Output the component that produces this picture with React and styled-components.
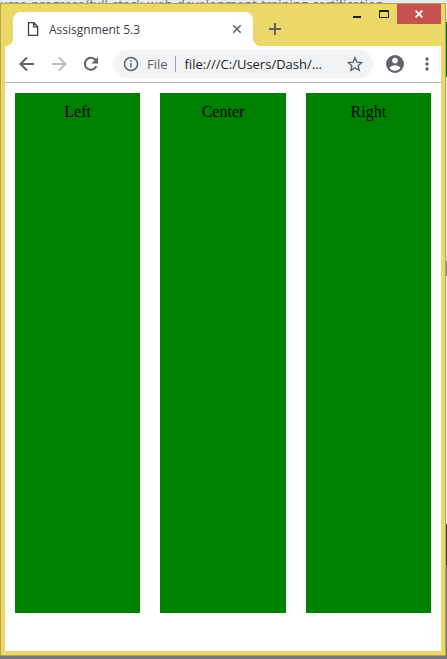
import React from "react";
import styled, { createGlobalStyle } from "styled-components";

const GlobalStyle = createGlobalStyle`
  * { box-sizing: border-box; }
  body { margin: 0; background: #808080; }
  button { font: inherit; }
`;

const Desktop = styled.div`
  display: flex;
  flex-direction: column;
  min-height: 100vh;
  padding: 0 1px 3px 0;
  overflow: hidden;
  background: linear-gradient(
    #e8e8e8 0 22px, #087008 22px 77px, #e8e8e8 77px 261px, #888888 261px 276px,
    #f0f0f0 276px 524px, #404040 524px 565px, #777777 565px
  );
`;

const BackdropLine = styled.div`
  height: 3px;
  overflow: hidden;
  background: #e9eaec;
  color: #6d7075;
  font: 13px/8px "Open Sans", sans-serif;
  white-space: nowrap;
`;

const Window = styled.div`
  display: flex;
  flex: 1;
  flex-direction: column;
  border: 1px solid #b5a353;
  background: #ecd769;
  padding: 0 4px 4px;
  font-family: "Open Sans", sans-serif;
`;

const TitleBar = styled.header`
  display: flex;
  align-items: flex-end;
  height: 42px;
`;

const Tab = styled.div`
  position: relative;
  display: flex;
  align-items: center;
  flex: 0 1 240px;
  height: 34px;
  margin-left: 8px;
  padding: 0 9px 0 14px;
  border-radius: 8px 8px 0 0;
  background: #ffffff;
  color: #3c4043;
  font-size: 12px;

  &::before,
  &::after {
    content: "";
    position: absolute;
    bottom: 0;
    width: 8px;
    height: 8px;
  }
  &::before {
    right: 100%;
    background: radial-gradient(circle at 0 0, transparent 8px, #ffffff 8px);
  }
  &::after {
    left: 100%;
    background: radial-gradient(circle at 100% 0, transparent 8px, #ffffff 8px);
  }
`;

const TabTitle = styled.span`
  flex: 1;
  margin-left: 10px;
  white-space: nowrap;
`;

const IconButton = styled.button`
  display: grid;
  place-items: center;
  flex: none;
  width: ${(p) => p.$size}px;
  height: ${(p) => p.$size}px;
  padding: 0;
  border: 0;
  background: none;
  color: ${(p) => p.$color || "#5f6368"};
`;

const NewTab = styled(IconButton)`
  margin: 0 0 5px 10px;
`;

const MenuButton = styled(IconButton)`
  margin-left: 6px;
`;

const WindowControls = styled.div`
  display: flex;
  align-self: flex-start;
  margin-left: auto;
`;

const CaptionButton = styled.button`
  display: grid;
  place-items: center;
  width: ${(p) => (p.$close ? 44 : 27)}px;
  height: 20px;
  padding: 0;
  border: 0;
  background: ${(p) => (p.$close ? "#c75050" : "transparent")};
  color: ${(p) => (p.$close ? "#ffffff" : "#1f1f1f")};
`;

const Toolbar = styled.nav`
  display: flex;
  align-items: center;
  height: 37px;
  padding: 0 4px 0 6px;
  border-bottom: 1px solid #b2b4b6;
  background: #ffffff;
`;

const AddressBar = styled.div`
  display: flex;
  align-items: center;
  flex: 1;
  min-width: 0;
  height: 28px;
  margin: 0 6px;
  padding: 0 8px 0 10px;
  border-radius: 14px;
  background: #f1f3f4;
  color: #5f6368;
  font-size: 13px;
`;

const Scheme = styled.span`
  margin-left: 8px;
  padding-right: 7px;
  border-right: 1px solid #9aa0a6;
  line-height: 16px;
`;

const AddressInput = styled.input`
  flex: 1;
  min-width: 0;
  margin: 0 18px 0 9px;
  padding: 0;
  border: 0;
  outline: 0;
  background: none;
  color: #202124;
  font: inherit;
`;

const Page = styled.main`
  display: grid;
  grid-template-columns: repeat(3, 1fr);
  align-items: start;
  flex: 1;
  gap: 20px;
  padding: 10px;
  background: #ffffff;
`;

const Column = styled.section`
  min-height: 520px;
  padding: 10px;
  background: #008000;
  color: #000000;
  font: 16px/18px "Liberation Serif", serif;
  text-align: center;
`;

const Glyph = ({ size = 16, children, ...rest }) => (
  <svg width={size} height={size} viewBox={`0 0 ${size} ${size}`} fill="none" stroke="currentColor" aria-hidden="true" {...rest}>
    {children}
  </svg>
);

const columns = ["Left", "Center", "Right"];

export default function App() {
  return (
    <Desktop>
      <GlobalStyle />
      <BackdropLine>urse-progress/full-stack-web-development-training-certification</BackdropLine>
      <Window>
        <TitleBar>
          <Tab>
            <Glyph size={12} viewBox="0 0 12 14" height={14} strokeWidth="1.3">
              <path d="M1.5 .7h5.3l3.9 3.9v8.7H1.5zM6.6 .7v4.1h4.1" />
            </Glyph>
            <TabTitle>Assisgnment 5.3</TabTitle>
            <IconButton $size={14} aria-label="Close tab">
              <Glyph size={14} strokeWidth="1.6"><path d="m3.3 3.3 7.4 7.4m0-7.4-7.4 7.4" /></Glyph>
            </IconButton>
          </Tab>
          <NewTab $size={24} aria-label="New tab">
            <Glyph size={12} strokeWidth="2"><path d="M6 0v12M0 6h12" /></Glyph>
          </NewTab>
          <WindowControls>
            <CaptionButton aria-label="Minimize">
              <Glyph strokeWidth="2"><path d="M4 11h8" /></Glyph>
            </CaptionButton>
            <CaptionButton aria-label="Maximize">
              <Glyph><path d="M3.5 4.5h9v7h-9zM3 5.5h10" /></Glyph>
            </CaptionButton>
            <CaptionButton $close aria-label="Close window">
              <Glyph size={12} strokeWidth="1.8"><path d="m2.7 2.7 6.6 6.6m0-6.6-6.6 6.6" /></Glyph>
            </CaptionButton>
          </WindowControls>
        </TitleBar>
        <Toolbar>
          <IconButton $size={32} aria-label="Back">
            <Glyph strokeWidth="2"><path d="M15 8H2M8 1.5 1.5 8 8 14.5" /></Glyph>
          </IconButton>
          <IconButton $size={32} $color="#babcbe" aria-label="Forward">
            <Glyph strokeWidth="2"><path d="M1 8h13M8 1.5 14.5 8 8 14.5" /></Glyph>
          </IconButton>
          <IconButton $size={32} aria-label="Reload">
            <Glyph strokeWidth="2">
              <path d="M13.4 10.2A6 6 0 1 1 12.6 4l.9 1" />
              <path d="M15 1v6.4H8.6z" fill="currentColor" stroke="none" />
            </Glyph>
          </IconButton>
          <AddressBar>
            <Glyph strokeWidth="1.5">
              <circle cx="8" cy="8" r="6.5" />
              <path d="M8 7v4.6M8 4.2v1.6" />
            </Glyph>
            <Scheme>File</Scheme>
            <AddressInput aria-label="Address" readOnly value="file:///C:/Users/Dash/..." />
            <IconButton $size={20} aria-label="Bookmark this page">
              <Glyph strokeWidth="1.4">
                <path d="m8 1.7 1.9 4.4 4.8.4-3.6 3.2 1.1 4.7L8 11.9l-4.2 2.5 1.1-4.7-3.6-3.2 4.8-.4z" />
              </Glyph>
            </IconButton>
          </AddressBar>
          <IconButton $size={32} aria-label="Profile">
            <Glyph size={18} fill="currentColor" stroke="none">
              <path fillRule="evenodd" d="M9 0a9 9 0 1 1 0 18A9 9 0 0 1 9 0zm0 2.8a2.8 2.8 0 1 0 0 5.6 2.8 2.8 0 0 0 0-5.6zm0 7.5c-1.9 0-5.3 1-5.3 2.9a6.6 6.6 0 0 0 10.6 0c0-1.9-3.4-2.9-5.3-2.9z" />
            </Glyph>
          </IconButton>
          <MenuButton $size={20} aria-label="Menu">
            <Glyph fill="currentColor" stroke="none">
              <circle cx="8" cy="3" r="1.7" />
              <circle cx="8" cy="8" r="1.7" />
              <circle cx="8" cy="13" r="1.7" />
            </Glyph>
          </MenuButton>
        </Toolbar>
        <Page>
          {columns.map((name) => (
            <Column key={name}>{name}</Column>
          ))}
        </Page>
      </Window>
    </Desktop>
  );
}
